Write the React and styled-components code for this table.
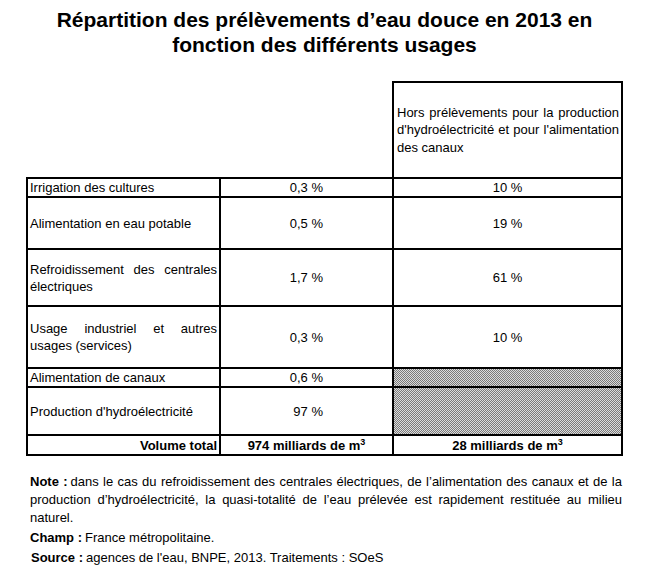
import React from "react";
import styled, { createGlobalStyle } from "styled-components";

const GlobalStyle = createGlobalStyle`
  html, body { margin: 0; padding: 0; background: #ffffff; }
  body {
    font-family: "Liberation Sans", Arial, sans-serif;
    color: #000000;
  }
`;

const Page = styled.div`
  width: 660px;
  padding-left: 26px;
  box-sizing: border-box;
`;

const Title = styled.h1`
  margin: 0;
  padding-top: 7px;
  width: 597px;
  font-size: 21px;
  line-height: 25px;
  font-weight: bold;
  text-align: center;
  color: #000;
`;

const Table = styled.table`
  margin-top: 24px;
  width: 597px;
  table-layout: fixed;
  border-collapse: separate;
  border-spacing: 0;
  font-size: 13px;
  line-height: 17px;
`;

const Row = styled.tr`
  height: ${(p) => p.$h}px;
`;

const Blank = styled.td`
  padding: 0;
  border-bottom: 2px solid #000;
  border-right: ${(p) => (p.$right ? "2px solid #000" : "none")};
`;

const HeadCell = styled.td`
  padding: 0 2px 0 3px;
  border-top: 2px solid #000;
  border-right: 2px solid #000;
  border-bottom: 2px solid #000;
  vertical-align: middle;
  line-height: 17.5px;
`;

const Cell = styled.td`
  padding: ${(p) => (p.$pr ? `0 ${p.$pr}px 0 2px` : "0 2px")};
  border-bottom: 2px solid #000;
  border-right: 2px solid #000;
  border-left: ${(p) => (p.$first ? "2px solid #000" : "none")};
  vertical-align: middle;
  text-align: ${(p) => p.$align || "left"};
  font-weight: ${(p) => (p.$bold ? "bold" : "normal")};
  white-space: nowrap;
  background: ${(p) =>
    p.$hatched
      ? "repeating-conic-gradient(#7a7a7a 0% 25%, #dcdcdc 0% 50%) 0 0 / 2px 2px"
      : "#fff"};
`;

const JLine = styled.span`
  display: block;
  text-align: justify;
  text-align-last: ${(p) => (p.$last ? "left" : "justify")};
  white-space: nowrap;
`;

const Sup = styled.sup`
  font-size: 9px;
  line-height: 0;
  vertical-align: 5px;
`;

const Notes = styled.div`
  width: 592px;
  margin-top: 17px;
  padding-left: 4px;
  font-size: 13px;
  line-height: 18px;
`;

const Para = styled.p`
  margin: 0 0 2px 0;
  padding-left: ${(p) => p.$indent || 0}px;
  text-align: justify;
`;

const Label = styled.b`
  font-weight: bold;
  margin-right: 3px;
`;

const rows = [
  { label: ["Irrigation des cultures"], a: "0,3 %", b: "10 %", h: 18 },
  { label: ["Alimentation en eau potable"], a: "0,5 %", b: "19 %", h: 52 },
  { label: ["Refroidissement des centrales", "électriques"], a: "1,7 %", b: "61 %", h: 57 },
  { label: ["Usage industriel et autres", "usages (services)"], a: "0,3 %", b: "10 %", h: 62 },
  { label: ["Alimentation de canaux"], a: "0,6 %", b: null, h: 18 },
  { label: ["Production d'hydroélectricité"], a: "97 %", b: null, h: 48 },
];

const headLines = [
  "Hors prélèvements pour la production",
  "d'hydroélectricité et pour l'alimentation",
  "des canaux",
];

function Lines({ lines }) {
  if (lines.length === 1) return lines[0];
  return lines.map((l, i) => (
    <JLine key={i} $last={i === lines.length - 1}>
      {l}
    </JLine>
  ));
}

export default function App() {
  return (
    <>
      <GlobalStyle />
      <Page>
        <Title>
          Répartition des prélèvements d’eau douce en 2013 en fonction des
          différents usages
        </Title>
        <Table>
          <colgroup>
            <col style={{ width: 195 }} />
            <col style={{ width: 173 }} />
            <col style={{ width: 229 }} />
          </colgroup>
          <tbody>
            <Row $h={98}>
              <Blank />
              <Blank $right />
              <HeadCell>
                <Lines lines={headLines} />
              </HeadCell>
            </Row>
            {rows.map((r, i) => (
              <Row key={i} $h={r.h}>
                <Cell $first>
                  <Lines lines={r.label} />
                </Cell>
                <Cell $align="right" $pr={69}>
                  {r.a}
                </Cell>
                {r.b ? (
                  <Cell $align="center">{r.b}</Cell>
                ) : (
                  <Cell $hatched />
                )}
              </Row>
            ))}
            <Row $h={20}>
              <Cell $first $align="right" $bold>
                Volume total
              </Cell>
              <Cell $align="center" $bold>
                974 milliards de m<Sup>3</Sup>
              </Cell>
              <Cell $align="center" $bold>
                28 milliards de m<Sup>3</Sup>
              </Cell>
            </Row>
          </tbody>
        </Table>
        <Notes>
          <Para>
            <Label>Note :</Label>dans le cas du refroidissement des centrales
            électriques, de l’alimentation des canaux et de la production
            d’hydroélectricité, la quasi-totalité de l’eau prélevée est
            rapidement restituée au milieu naturel.
          </Para>
          <Para>
            <Label>Champ :</Label>France métropolitaine.
          </Para>
          <Para $indent={1}>
            <Label>Source :</Label>agences de l'eau, BNPE, 2013. Traitements :
            SOeS
          </Para>
        </Notes>
      </Page>
    </>
  );
}
